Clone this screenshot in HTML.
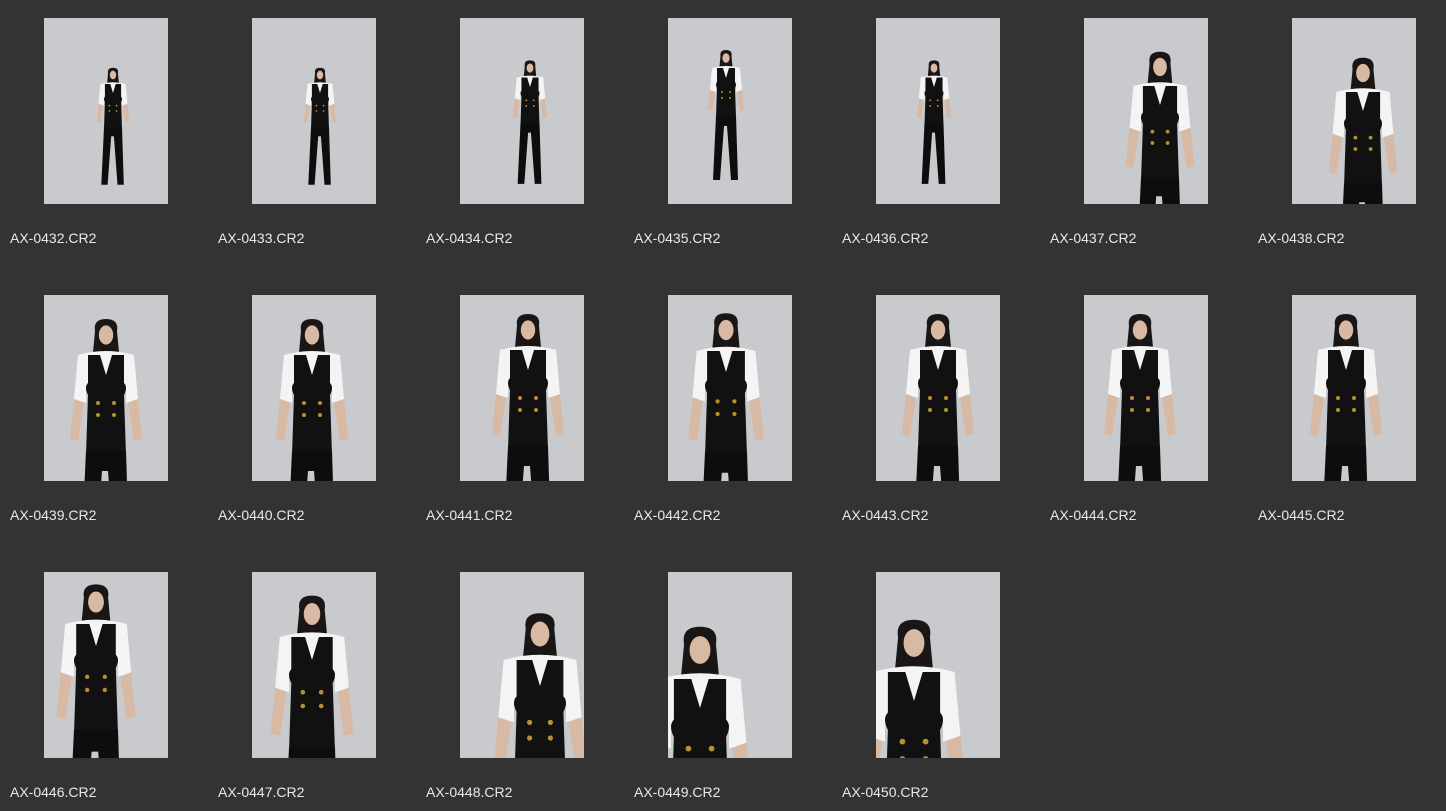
<!DOCTYPE html>
<html><head><meta charset="utf-8"><style>
html,body{margin:0;padding:0;background:#333333;width:1446px;height:811px;overflow:hidden;position:relative}
.t{position:absolute;width:124px;height:186px;background:#c8cacd;overflow:hidden}
.t svg{display:block}
.l{position:absolute;font-family:"Liberation Sans",sans-serif;font-size:14px;color:#e8e8e8;line-height:16px;white-space:nowrap}
</style></head><body>
<svg width="0" height="0" style="position:absolute;left:0;top:0">
<defs>
<g id="f">
<path d="M-5.5 -2 Q-6.5 -8 0 -8 Q6.5 -8 5.5 -2 L7 14 L-7 14 Z" fill="#1a1616"/>
<ellipse cx="0" cy="0" rx="3.6" ry="4.8" fill="#d8b9a4"/>
<path d="M-14 10 Q0 6 14 10 L16 32 L10 34 L10 26 L-10 26 L-10 34 L-16 32 Z" fill="#f4f4f4"/>
<path d="M-16 32 L-18 52 L-14 53 L-11 34 Z M16 32 L18 52 L14 53 L11 34 Z" fill="#d8b9a4"/>
<path d="M-9 10 L-3 10 L0 20 L3 10 L9 10 L9 24 Q11 26 9 30 L10 60 L-10 60 L-9 30 Q-11 26 -9 24 Z" fill="#111"/>
<path d="M-10 58 L10 58 L12 122 L5 122 L1 68 L-2 68 L-6 122 L-13 122 Z" fill="#0d0d0d"/>
<circle cx="-4" cy="34" r="1" fill="#b8912e"/><circle cx="4" cy="34" r="1" fill="#b8912e"/>
<circle cx="-4" cy="40" r="1" fill="#b8912e"/><circle cx="4" cy="40" r="1" fill="#b8912e"/>
</g>
</defs></svg>
<div id="c"></div>
<script>
var P=[[69,57,.9],[68,57,.9],[70,50,.95],[58,40,1],[58,50,.95],[76,49,1.9],[71,55,1.9],
[62,40,2],[60,40,2],[68,35,2],[58,35,2.1],[62,35,2],[56,35,2],[54,35,2],
[52,30,2.2],[60,42,2.3],[80,62,2.6],[32,78,2.9],[38,71,2.9]];
var h='';
for(var i=0;i<19;i++){var r=Math.floor(i/7),c=i%7,x=44+208*c,y=18+277*r,p=P[i];
h+='<div class="t" style="left:'+x+'px;top:'+y+'px"><svg width="124" height="186"><use href="#f" transform="translate('+p[0]+' '+p[1]+') scale('+p[2]+')"/></svg></div>';
h+='<div class="l" style="left:'+(10+208*c)+'px;top:'+(230+277*r)+'px">AX-0'+(432+i)+'.CR2</div>';}
document.getElementById('c').innerHTML=h;
</script>
</body></html>
